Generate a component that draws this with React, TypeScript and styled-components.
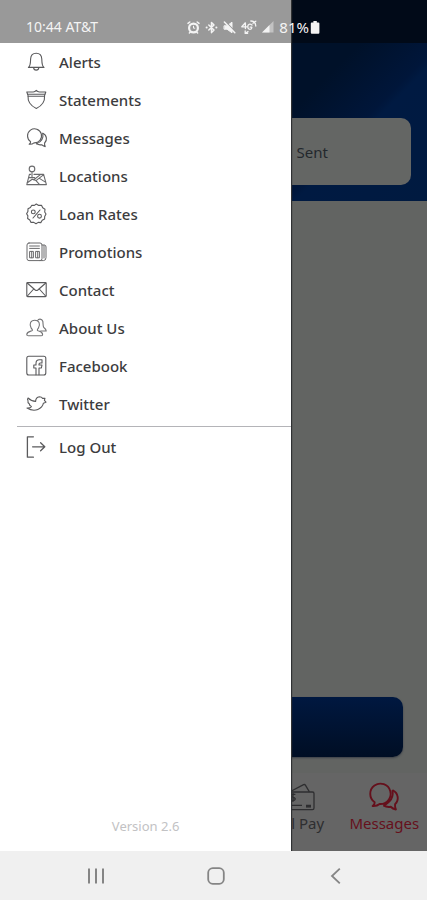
import React from 'react';
import styled, { createGlobalStyle } from 'styled-components';

const GlobalStyle = createGlobalStyle`
  *, *::before, *::after { box-sizing: border-box; }
  body {
    margin: 0;
    background: #f0f0f0;
    font-family: "Noto Sans", "Open Sans", sans-serif;
    color: #3c3c3e;
  }
  button { font: inherit; color: inherit; background: none; border: 0; padding: 0; cursor: pointer; }
  a { color: inherit; text-decoration: none; }
  svg { display: block; flex: none; }
`;

const Phone = styled.div`
  display: flex;
  flex-direction: column;
  min-height: 100vh;
`;

const Stage = styled.div`
  position: relative;
  display: flex;
  flex: 1;
  overflow: hidden;
`;

const Page = styled.div`
  display: flex;
  flex-direction: column;
  flex: 1;
  min-width: 0;
  background: #626462;
`;

const PageHeader = styled.header`
  padding: 118px 16px 16px;
  background:
    linear-gradient(#010a18, #010a18) top / 100% 43px no-repeat,
    linear-gradient(135deg, #001129 0%, #001129 64%, #00163a 77%, #001a42 79%, #001a40 100%);
`;

const Segments = styled.div`
  display: grid;
  grid-template-columns: 1fr 1fr;
  height: 67px;
  border-radius: 10px;
  background: #646664;
`;

const Segment = styled.button`
  grid-column: 2;
  font-size: 15px;
  color: #23282d;
`;

const PageBody = styled.main`
  display: flex;
  flex: 1;
  align-items: flex-end;
  padding: 16px 24px;
`;

const PrimaryButton = styled.button`
  flex: 1;
  height: 60px;
  border-radius: 10px;
  background: linear-gradient(#001840, #000e24);
  box-shadow: 0 1px 2px #3c4048;
`;

const TabBar = styled.nav`
  display: grid;
  grid-template-columns: repeat(5, 1fr);
  height: 78px;
  background: #656565;
`;

const Tab = styled.button<{ $column: number; $active?: boolean }>`
  grid-column: ${(p) => p.$column};
  display: flex;
  flex-direction: column;
  align-items: center;
  padding-top: 8px;
  font-size: 15px;
  line-height: 20px;
  white-space: nowrap;
  color: ${(p) => (p.$active ? '#65101c' : '#2e2e30')};
`;

const Drawer = styled.aside`
  position: absolute;
  inset: 0 auto 0 0;
  width: 68.2%;
  display: flex;
  flex-direction: column;
  padding-top: 43px;
  background: linear-gradient(#999, #999) top / 100% 43px no-repeat, #fff;
  box-shadow: 1px 0 1px #303234;
`;

const Menu = styled.ul`
  list-style: none;
  margin: 0;
  padding: 0;
`;

const MenuLink = styled.a`
  display: flex;
  align-items: center;
  gap: 11px;
  height: 38px;
  padding-left: 26px;
  font-size: 15px;
  font-weight: 500;
  line-height: 20px;
`;

const Divider = styled.hr`
  width: auto;
  height: 1px;
  margin: 3px 0 1px 17px;
  border: 0;
  background: #b4b4b8;
`;

const Version = styled.p`
  margin: auto 0 16px;
  text-align: center;
  font-size: 13px;
  line-height: 18px;
  color: #c2c2c4;
`;

const StatusBar = styled.div`
  position: absolute;
  inset: 0 0 auto 0;
  display: flex;
  align-items: center;
  justify-content: space-between;
  height: 43px;
  padding: 11px 107px 0 26px;
  color: #f4f4f4;
  font-size: 14px;
  line-height: 20px;
`;

const StatusIcons = styled.div`
  display: flex;
  align-items: center;
  gap: 5px;
`;

const Battery = styled.span`
  display: flex;
  align-items: center;
  gap: 1px;
  font-size: 15px;
`;

const SystemNav = styled.nav`
  display: grid;
  grid-template-columns: repeat(3, 1fr);
  height: 49px;
  padding: 0 31px 0 36px;
  background: #f0f0f0;
`;

const SystemButton = styled.button`
  display: grid;
  place-items: center;
  color: #858585;
`;

type IconProps = { children: React.ReactNode };

const MenuIcon = ({ children }: IconProps) => (
  <svg width="22" height="22" viewBox="0 0 22 22" fill="none" stroke="#5a5a5c" strokeWidth="1.1" strokeLinecap="round" strokeLinejoin="round" aria-hidden="true">
    {children}
  </svg>
);

const StatusIcon = ({ children }: IconProps) => (
  <svg width="13" height="13" viewBox="0 0 13 13" fill="none" stroke="currentColor" strokeWidth="1.5" strokeLinecap="round" strokeLinejoin="round" aria-hidden="true">
    {children}
  </svg>
);

const Bubbles = () => (
  <>
    <path d="M4.6 14.6A7 7 0 1 1 8 15.8Q6.2 17.4 3.2 17.2Q4.8 16 4.6 14.6Z" />
    <path d="M16.8 6.3C21.2 8.4 21.4 13.4 18.6 16Q18.4 18 19.2 19.6Q17 19.2 15.6 17.7Q13 18.2 10.6 16.8" />
    <path d="M16.8 6.3Q18.1 13.4 10.6 16.8" />
  </>
);

const items: { label: string; icon: React.ReactNode }[] = [
  {
    label: 'Alerts',
    icon: (
      <>
        <path d="M2.4 16.4C4.6 15 4.5 12.5 4.6 8C4.8 4.4 7 2.2 10.2 2.2S15.6 4.4 15.8 8C15.9 12.5 15.8 15 18 16.4Z" />
        <path d="M7.6 16.6C7.8 19.9 12.6 19.9 12.8 16.6" />
      </>
    ),
  },
  {
    label: 'Statements',
    icon: (
      <>
        <path d="M.8 3H7.2Q9 2.8 10.3 1.3Q11.6 2.8 13.4 3H19.8L18.6 6.4C19 12.4 16.3 16.8 10.3 19.4C4.3 16.8 1.6 12.4 2 6.4Z" />
        <path d="M1.8 5.3H18.8M2.2 7.3H18.4" />
      </>
    ),
  },
  { label: 'Messages', icon: <Bubbles /> },
  {
    label: 'Locations',
    icon: (
      <g stroke="#6a6a6c">
        <circle cx="6" cy="3.9" r="2.8" />
        <path d="M6 6.7V12.5M4.6 9.4H3.4L.8 19.6H20.4L17.6 9.4H8M1 18L6.2 14.2L10 15.6L17.8 9.6M7.8 14.8L14.4 9.6M10 15.6L13.4 19.4M13.4 13.4L19.8 17.4M3 12.6H8.6" />
      </g>
    ),
  },
  {
    label: 'Loan Rates',
    icon: (
      <>
        <path d="M10.3 1L12.7 2.4L15.5 2.2L16.7 4.7L19 6.2L18.7 9L20 11L18.7 13.4L18.6 16L16.2 17.3L14.8 19.6L12.2 19.4L10 20.8L7.8 19.4L5 19.4L3.8 17L1.6 15.5L1.9 12.9L.6 10.8L1.9 8.4L2 5.8L4.4 4.5L5.8 2.2L8.4 2.4Z" />
        <path d="M14 7L7 15" />
        <circle cx="7.3" cy="8.9" r="1.9" />
        <circle cx="13.5" cy="13.2" r="1.9" />
      </>
    ),
  },
  {
    label: 'Promotions',
    icon: (
      <g stroke="#6a6a6c" strokeWidth="1">
        <rect x="1" y="2" width="15" height="17.6" rx="2" />
        <path d="M16 4H18.6Q20 4.2 20 6V16.6Q20 19.6 17.4 19.6H14M18 4.4V17" />
        <path d="M3.6 5H13.4M3.6 7.4H13.4M4 10.4H7.4V16.8H4ZM10 10.4H13.4V16.8H10ZM5.7 10.4V16.8M11.7 10.4V16.8" />
      </g>
    ),
  },
  {
    label: 'Contact',
    icon: (
      <>
        <rect x=".8" y="3.6" width="19.4" height="14" rx=".8" />
        <path d="M1.2 4L9.2 11Q10.5 12 11.8 11L19.8 4M1.4 17L7.7 10M19.6 17L13.3 10" />
      </>
    ),
  },
  {
    label: 'About Us',
    icon: (
      <g stroke="#747476">
        <path d="M.8 17.4C1 14.8 3.2 14.6 5.8 13.8C7 13.4 6.2 12.4 5.2 11.2C2.8 7 4.6 3.2 8.8 3.2S14.8 7 12.4 11.2C11.4 12.4 10.8 13.4 12 13.8C14.6 14.6 16.4 14.8 16.6 17.4Q16.6 18.8 15 18.8H2.4Q.8 18.8 .8 17.4Z" />
        <path d="M11.6 3.6C12.4 1.6 15.8 1.4 16.8 4.2C17.2 7 16.9 8.5 17.6 10.2C17.8 11 20 11.4 20.2 14H14.6" />
      </g>
    ),
  },
  {
    label: 'Facebook',
    icon: (
      <>
        <rect x=".8" y="1.2" width="19" height="18.8" rx="2" />
        <path d="M10 19.8V13H7.8V10H10V8.4Q10 4.8 13.4 4.8H16V8H14.2Q13 8 13 9.2V10H16L15.4 13H13V19.8" />
      </>
    ),
  },
  {
    label: 'Twitter',
    icon: <path d="M1 15Q4.3 15.2 5.4 13.6Q3.2 12.6 3.4 11Q1.4 9.6 2 7.8Q1 6.2 2 5Q5.4 8.3 9.6 8.4Q9.8 4.2 13.4 3.8Q15.6 3.8 16.6 5.4L19 5.2L18.4 7.4L20 9.2L17.4 10.2C16.4 15.6 9 20 1 15Z" />,
  },
];

export default function App() {
  return (
    <>
      <GlobalStyle />
      <Phone>
        <Stage>
          <Page>
            <PageHeader>
              <Segments>
                <Segment type="button">Sent</Segment>
              </Segments>
            </PageHeader>
            <PageBody>
              <PrimaryButton type="button" aria-label="Compose" />
            </PageBody>
            <TabBar>
              <Tab type="button" $column={4}>
                <svg width="32" height="32" viewBox="0 0 32 32" fill="none" stroke="currentColor" strokeWidth="1.3" strokeLinejoin="round" aria-hidden="true">
                  <rect x="1" y="11" width="30" height="17.6" rx="1.6" />
                  <path d="M7 10.8L20.6 3.6Q21.8 3.2 22.4 4.2L26.4 10.8M1 24.4H19M23 24.4H28" />
                  <path d="M12.4 13.4H9.8Q7.8 13.6 8 15Q8.2 16.2 10 16.4Q12.4 16.8 12.2 18.2Q12 19.6 9.8 19.6H7.6M10 12V21" />
                  <path d="M23 25.6H28" strokeWidth="2" />
                </svg>
                Bill Pay
              </Tab>
              <Tab type="button" $column={5} $active>
                <svg width="32" height="32" viewBox="0 0 22 22" fill="none" stroke="currentColor" strokeWidth="1.3" strokeLinejoin="round" aria-hidden="true">
                  <Bubbles />
                </svg>
                Messages
              </Tab>
            </TabBar>
          </Page>

          <Drawer aria-label="Menu">
            <Menu>
              {items.map((item) => (
                <li key={item.label}>
                  <MenuLink href="#">
                    <MenuIcon>{item.icon}</MenuIcon>
                    {item.label}
                  </MenuLink>
                </li>
              ))}
            </Menu>
            <Divider />
            <MenuLink href="#">
              <MenuIcon>
                <path d="M7.4 .8H1.4V21.2H7.4M6.6 10.8H18.6M14.6 6.8L18.8 10.8L14.6 14.8" strokeWidth="1.3" />
              </MenuIcon>
              Log Out
            </MenuLink>
            <Version>Version 2.6</Version>
          </Drawer>

          <StatusBar>
            <span>10:44 AT&amp;T</span>
            <StatusIcons>
              <StatusIcon>
                <circle cx="6.5" cy="7" r="4.4" strokeWidth="2.2" />
                <path d="M6.5 5.2V7.2H7.8" strokeWidth="1" />
                <path d="M1 2.4L2.8 1M12 2.4L10.2 1M2.4 12L3.4 11M10.6 12L9.6 11" />
              </StatusIcon>
              <StatusIcon>
                <path d="M3.8 4L9 9L6.5 11.6V1.4L9 4L3.8 9" />
                <path d="M1.6 6.5H1.7M11.3 6.5H11.4" strokeWidth="2" />
              </StatusIcon>
              <StatusIcon>
                <path d="M1.4 4.8H4L9 1.2V11.8L4 8.2H1.4Z" fill="currentColor" strokeWidth="1" />
                <path d="M2.2 .4L12.6 11" stroke="#999" strokeWidth="1.2" />
                <path d="M1.4 1L11.8 11.8" />
              </StatusIcon>
              <svg width="16" height="15" viewBox="0 0 16 15" fill="none" stroke="currentColor" strokeWidth="1.3" strokeLinecap="round" strokeLinejoin="round" aria-hidden="true">
                <path d="M4.4 8.6V2.8L.8 6.8H5.6M11 5Q8.6 3 7 5.4Q6.2 9 9 9.4Q11 9.2 10.8 7.2H9.2M4.4 13.2L7 11.6M4.2 11V13.4H6.6M9.8 1Q14.6 1 14.8 6M12 3.2L14.8 1.2" />
              </svg>
              <svg width="12" height="12" viewBox="0 0 12 12" aria-hidden="true">
                <path d="M0 11.5L11.5 0V11.5Z" fill="#fff" opacity=".4" />
                <path d="M0 11.5L7.5 4V11.5Z" fill="#fff" opacity=".8" />
              </svg>
              <Battery>
                81%
                <svg width="10" height="13" viewBox="0 0 10 13" fill="currentColor" aria-hidden="true">
                  <path d="M3.4 0H6.8V1.4H8.4Q9.4 1.4 9.4 2.6V11.6Q9.4 12.8 8.4 12.8H1.8Q.8 12.8 .8 11.6V2.6Q.8 1.4 1.8 1.4H3.4Z" />
                </svg>
              </Battery>
            </StatusIcons>
          </StatusBar>
        </Stage>

        <SystemNav aria-label="System">
          <SystemButton type="button" aria-label="Recent apps">
            <svg width="18" height="18" viewBox="0 0 18 18" fill="none" stroke="currentColor" strokeWidth="2" aria-hidden="true">
              <path d="M2 1.5V16.5M9 1.5V16.5M16 1.5V16.5" />
            </svg>
          </SystemButton>
          <SystemButton type="button" aria-label="Home">
            <svg width="18" height="18" viewBox="0 0 18 18" fill="none" stroke="currentColor" strokeWidth="1.8" aria-hidden="true">
              <rect x="1.2" y="1.2" width="15.6" height="15.6" rx="4.6" />
            </svg>
          </SystemButton>
          <SystemButton type="button" aria-label="Back">
            <svg width="18" height="18" viewBox="0 0 18 18" fill="none" stroke="currentColor" strokeWidth="1.8" aria-hidden="true">
              <path d="M12.8 1.6L5 9L12.8 16.4" />
            </svg>
          </SystemButton>
        </SystemNav>
      </Phone>
    </>
  );
}
